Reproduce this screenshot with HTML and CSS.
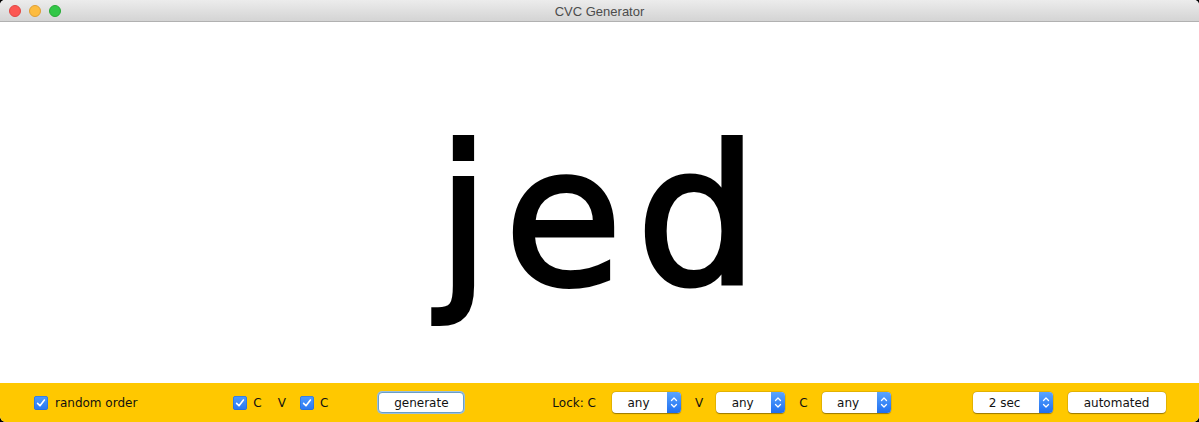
FILE: index.html
```html
<!DOCTYPE html>
<html>
<head>
<meta charset="utf-8">
<link rel="stylesheet" href="styles.css">
<title>CVC Generator</title>
</head>
<body>
<div class="window">
  <div class="titlebar">
    <div class="lights">
      <span class="light red"></span>
      <span class="light yellow"></span>
      <span class="light green"></span>
    </div>
    <div class="title">CVC Generator</div>
  </div>
  <div class="stage">
    <div class="word">jed</div>
  </div>
  <div class="toolbar">
    <label class="check first"><span class="box"><svg viewBox="0 0 14 14" width="14" height="14"><path d="M3.6 7.4 L6 9.8 L10.4 4" fill="none" stroke="#fff" stroke-width="1.6" stroke-linecap="round" stroke-linejoin="round"/></svg></span><span class="lbl">random order</span></label>

    <label class="check cvc"><span class="box"><svg viewBox="0 0 14 14" width="14" height="14"><path d="M3.6 7.4 L6 9.8 L10.4 4" fill="none" stroke="#fff" stroke-width="1.6" stroke-linecap="round" stroke-linejoin="round"/></svg></span><span class="lbl">C</span></label>
    <span class="txt v1">V</span>
    <label class="check c2"><span class="box"><svg viewBox="0 0 14 14" width="14" height="14"><path d="M3.6 7.4 L6 9.8 L10.4 4" fill="none" stroke="#fff" stroke-width="1.6" stroke-linecap="round" stroke-linejoin="round"/></svg></span><span class="lbl">C</span></label>

    <button class="btn gen">generate</button>

    <span class="txt lock">Lock: C</span>
    <div class="select s1"><span class="val">any</span><span class="step"><svg viewBox="0 0 14 21" width="14" height="21"><path d="M4.5 8.5 L7 6 L9.5 8.5 M4.5 12.5 L7 15 L9.5 12.5" fill="none" stroke="#fff" stroke-width="1.3" stroke-linecap="round" stroke-linejoin="round"/></svg></span></div>
    <span class="txt lv">V</span>
    <div class="select s2"><span class="val">any</span><span class="step"><svg viewBox="0 0 14 21" width="14" height="21"><path d="M4.5 8.5 L7 6 L9.5 8.5 M4.5 12.5 L7 15 L9.5 12.5" fill="none" stroke="#fff" stroke-width="1.3" stroke-linecap="round" stroke-linejoin="round"/></svg></span></div>
    <span class="txt lc">C</span>
    <div class="select s3"><span class="val">any</span><span class="step"><svg viewBox="0 0 14 21" width="14" height="21"><path d="M4.5 8.5 L7 6 L9.5 8.5 M4.5 12.5 L7 15 L9.5 12.5" fill="none" stroke="#fff" stroke-width="1.3" stroke-linecap="round" stroke-linejoin="round"/></svg></span></div>

    <div class="select sec"><span class="val">2 sec</span><span class="step"><svg viewBox="0 0 14 21" width="14" height="21"><path d="M4.5 8.5 L7 6 L9.5 8.5 M4.5 12.5 L7 15 L9.5 12.5" fill="none" stroke="#fff" stroke-width="1.3" stroke-linecap="round" stroke-linejoin="round"/></svg></span></div>
    <button class="btn auto">automated</button>
  </div>
</div>
</body>
</html>
```
FILE: styles.css
```css
html, body {
  margin: 0;
  padding: 0;
  background: #000;
}
.window {
  width: 1199px;
  height: 422px;
  display: flex;
  flex-direction: column;
  background: #fff;
  border-radius: 5px 5px 6px 6px;
  overflow: hidden;
  font-family: "DejaVu Sans", "Lucida Grande", sans-serif;
  font-size: 12px;
  color: #111;
}
.titlebar {
  height: 21px;
  flex: none;
  position: relative;
  display: flex;
  align-items: center;
  justify-content: center;
  background: linear-gradient(#ececec, #d4d4d4);
  border-bottom: 1px solid #b1b1b1;
}
.lights {
  position: absolute;
  left: 9px;
  top: 5px;
  display: flex;
  gap: 8px;
}
.light {
  width: 12px;
  height: 12px;
  border-radius: 50%;
  box-sizing: border-box;
}
.red { background: #fc5753; border: 1px solid #df4744; }
.yellow { background: #fdbc40; border: 1px solid #de9f34; }
.green { background: #33c748; border: 1px solid #27aa35; }
.title {
  font-family: "Liberation Sans", Arial, sans-serif;
  font-size: 13px;
  color: #4c4c4c;
  padding-top: 1px;
}
.stage {
  flex: 1;
  display: flex;
  justify-content: center;
  align-items: flex-start;
  padding-top: 100px;
  box-sizing: border-box;
}
.word {
  font-family: "DejaVu Sans", sans-serif;
  font-size: 192px;
  line-height: 1;
  color: #000;
  -webkit-text-stroke: 4px #000;
  letter-spacing: 14px;
  margin-left: 10px;
}
.toolbar {
  height: 39px;
  flex: none;
  background: #ffc800;
  display: flex;
  align-items: center;
  padding-left: 34px;
  box-sizing: border-box;
}
.check {
  display: flex;
  align-items: center;
}
.box {
  width: 14px;
  height: 14px;
  border-radius: 3px;
  background: linear-gradient(#4d9bff, #2a77ef);
  box-shadow: inset 0 0 0 0.5px #1f68d8;
  display: block;
}
.box svg { display: block; }
.lbl { margin-left: 6px; }
.first .lbl { margin-left: 7px; }
.cvc { margin-left: 96px; }
.v1 { margin-left: 16px; }
.c2 { margin-left: 14px; }
.btn {
  font-family: "DejaVu Sans", "Lucida Grande", sans-serif;
  font-size: 12px;
  color: #111;
  height: 21px;
  background: #fff;
  border-radius: 4px;
  padding: 0;
  display: flex;
  align-items: center;
  justify-content: center;
}
.gen {
  margin-left: 50px;
  width: 86px;
  border: 1px solid #6a9fc8;
  box-shadow: 0 0 0 1px #9cc0dd;
}
.auto {
  margin-left: 15px;
  width: 98px;
  border: none;
  box-shadow: 0 0.5px 1px rgba(0,0,0,0.35), 0 0 0 0.5px rgba(0,0,0,0.15);
}
.lock { margin-left: 88px; }
.select {
  height: 21px;
  width: 69px;
  background: #fff;
  border-radius: 4px;
  box-shadow: 0 0.5px 1px rgba(0,0,0,0.35), 0 0 0 0.5px rgba(0,0,0,0.15);
  display: flex;
  align-items: center;
  overflow: hidden;
}
.val {
  flex: 1;
  text-align: center;
  padding-right: 2px;
}
.step {
  width: 14px;
  height: 21px;
  background: linear-gradient(#5aa5ff, #1f6ff0);
  display: block;
}
.step svg { display: block; }
.s1 { margin-left: 16px; }
.lv { margin-left: 14px; }
.s2 { margin-left: 13px; }
.lc { margin-left: 14px; }
.s3 { margin-left: 14px; }
.sec { margin-left: 82px; width: 80px; }
```
